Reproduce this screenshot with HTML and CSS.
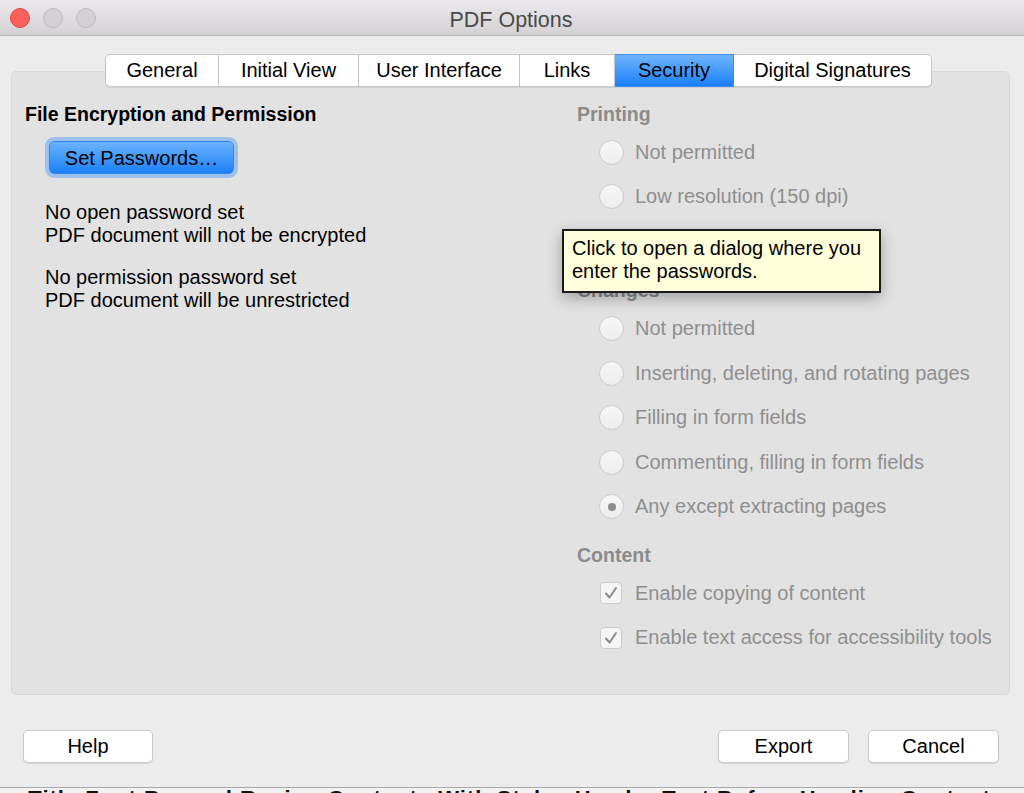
FILE: index.html
```html
<!DOCTYPE html>
<html lang="en">
<head>
    <meta charset="UTF-8">
    <title>PDF Options</title>
    <link rel="stylesheet" href="styles.css">
</head>
<body>
    <div class="window">
        <header class="titlebar">
            <div class="lights">
                <span class="light close"></span>
                <span class="light"></span>
                <span class="light"></span>
            </div>
            <div class="title">PDF Options</div>
            <div></div>
        </header>

        <main class="dialog">
            <nav class="tabs">
                <a class="tab" href="#">General</a>
                <a class="tab" href="#">Initial View</a>
                <a class="tab" href="#">User Interface</a>
                <a class="tab" href="#">Links</a>
                <a class="tab active" href="#">Security</a>
                <a class="tab" href="#">Digital Signatures</a>
            </nav>

            <section class="panel">
                <div class="col">
                    <h2 class="heading">File Encryption and Permission</h2>
                    <button class="btn-primary">Set Passwords…</button>
                    <p class="status">No open password set<br>PDF document will not be encrypted</p>
                    <p class="status second">No permission password set<br>PDF document will be unrestricted</p>
                </div>

                <div class="col">
                    <h2 class="heading muted">Printing</h2>
                    <div class="option"><span class="radio"></span>Not permitted</div>
                    <div class="option"><span class="radio"></span>Low resolution (150 dpi)</div>
                    <div class="option"><span class="radio"></span>High resolution</div>

                    <h2 class="heading muted changes">Changes</h2>
                    <div class="option"><span class="radio"></span>Not permitted</div>
                    <div class="option"><span class="radio"></span>Inserting, deleting, and rotating pages</div>
                    <div class="option"><span class="radio"></span>Filling in form fields</div>
                    <div class="option"><span class="radio"></span>Commenting, filling in form fields</div>
                    <div class="option"><span class="radio checked"></span>Any except extracting pages</div>

                    <h2 class="heading muted">Content</h2>
                    <div class="option">
                        <span class="check"><svg viewBox="0 0 22 22" width="22" height="22"><polyline points="6,11.5 9.5,15.5 16,6" /></svg></span>
                        Enable copying of content
                    </div>
                    <div class="option">
                        <span class="check"><svg viewBox="0 0 22 22" width="22" height="22"><polyline points="6,11.5 9.5,15.5 16,6" /></svg></span>
                        Enable text access for accessibility tools
                    </div>
                </div>
            </section>

            <footer class="buttons">
                <button class="btn">Help</button>
                <span class="spacer"></span>
                <button class="btn">Export</button>
                <button class="btn">Cancel</button>
            </footer>
        </main>

        <div class="tooltip">Click to open a dialog where you<br>enter the passwords.</div>
    </div>

    <div class="backdrop">
        <span>a Title Font Bar and Region Contents With Styles Header Text Before Heading Content</span>
    </div>
</body>
</html>
```

FILE: styles.css
```css
body {
    margin: 0;
    padding: 0;
    font-family: "Liberation Sans", Arial, sans-serif;
    background-color: #ffffff;
    overflow: hidden;
}
.window {
    position: relative;
    height: 788px;
    box-sizing: border-box;
    background-color: #ececec;
    border-bottom: 1px solid #a9a9a9;
}
.titlebar {
    display: grid;
    grid-template-columns: 1fr auto 1fr;
    align-items: center;
    height: 35px;
    background: linear-gradient(#ebe9eb, #d4d2d4);
    border-bottom: 1px solid #b4b4b4;
}
.lights {
    display: flex;
    gap: 13px;
    padding: 1px 0 0 10px;
}
.light {
    width: 20px;
    height: 20px;
    box-sizing: border-box;
    border-radius: 50%;
    background-color: #d3d1d3;
    border: 1px solid #bdbbbd;
}
.light.close {
    background-color: #fc605b;
    border-color: #de4842;
}
.title {
    font-size: 21.5px;
    color: #4a4a4a;
    margin: 5px 0 0 -2px;
}
.dialog {
    display: flex;
    flex-direction: column;
    padding: 0 14px 0 11px;
}
.tabs {
    display: flex;
    align-self: flex-start;
    margin: 18px 0 -16px 94px;
    position: relative;
    z-index: 1;
}
.tab {
    box-sizing: border-box;
    height: 33px;
    line-height: 31px;
    text-align: center;
    font-size: 20px;
    color: #000;
    text-decoration: none;
    background-color: #fff;
    border: 1px solid #c6c6c6;
    border-left: none;
    box-shadow: 0 1px 1px rgba(0, 0, 0, 0.08);
}
.tab:nth-child(1) { width: 114px; border-left: 1px solid #c6c6c6; border-radius: 5px 0 0 5px; }
.tab:nth-child(2) { width: 140px; }
.tab:nth-child(3) { width: 161px; }
.tab:nth-child(4) { width: 95px; }
.tab:nth-child(5) { width: 119px; }
.tab:nth-child(6) { width: 198px; border-radius: 0 5px 5px 0; }
.tab.active {
    background: linear-gradient(#6fb4fb, #1a80fa);
    border-color: #3a8ef0;
}
.panel {
    display: grid;
    grid-template-columns: 552px 1fr;
    height: 624px;
    box-sizing: border-box;
    padding: 29px 13px 0 13px;
    background-color: #e2e2e2;
    border: 1px solid #d8d8d8;
    border-radius: 5px;
}
.col {
    display: flex;
    flex-direction: column;
    align-items: flex-start;
}
.heading {
    margin: 0;
    font-size: 19.5px;
    line-height: 26px;
    font-weight: bold;
    color: #000;
}
.heading.muted {
    color: #8b8b8b;
    margin: 13px 0 3px;
}
.heading.muted:first-child {
    margin-top: 0;
}
.heading.changes {
    margin-bottom: 4px;
}
.btn-primary {
    width: 185px;
    height: 33px;
    margin: 14px 0 0 24px;
    padding-top: 2px;
    font-family: inherit;
    font-size: 20px;
    color: #000;
    background: linear-gradient(#6cb3fd, #1b80f9);
    border: 1px solid #2f86ee;
    border-radius: 5px;
    box-shadow: 0 0 0 4px rgba(112, 172, 243, 0.6);
}
.status {
    margin: 27px 0 0 20px;
    font-size: 20px;
    line-height: 23px;
    color: #000;
}
.status.second {
    margin-top: 19px;
}
.option {
    display: flex;
    align-items: center;
    height: 44.5px;
    padding-left: 22px;
    font-size: 20px;
    color: #8e8e8e;
    white-space: nowrap;
}
.radio {
    position: relative;
    width: 25px;
    height: 25px;
    box-sizing: border-box;
    margin-right: 11px;
    border-radius: 50%;
    border: 1px solid #cbcbcb;
    background: linear-gradient(#f6f6f6, #eeeeee);
}
.radio.checked::after {
    content: "";
    position: absolute;
    left: 7.5px;
    top: 7.5px;
    width: 8px;
    height: 8px;
    border-radius: 50%;
    background-color: #8c8c8c;
}
.check {
    display: flex;
    width: 22px;
    height: 22px;
    box-sizing: border-box;
    margin: 0 13px 0 1px;
    border: 1px solid #cbcbcb;
    border-radius: 4px;
    background-color: #f5f5f5;
}
.check svg {
    margin: -1px;
    fill: none;
    stroke: #8a8a8a;
    stroke-width: 2;
    stroke-linecap: round;
    stroke-linejoin: round;
}
.buttons {
    display: flex;
    gap: 19px;
    margin-top: 35px;
    padding: 0 11px 0 12px;
}
.spacer {
    flex: 1;
}
.btn {
    width: 131px;
    height: 33px;
    font-family: inherit;
    font-size: 20px;
    color: #000;
    background-color: #fff;
    border: 1px solid #c9c9c9;
    border-radius: 5px;
    box-shadow: 0 1px 1px rgba(0, 0, 0, 0.1);
}
.btn:first-child {
    width: 130px;
}
.tooltip {
    position: absolute;
    left: 562px;
    top: 229px;
    width: 319px;
    height: 64px;
    box-sizing: border-box;
    padding: 6px 8px 4px;
    font-size: 20px;
    line-height: 23px;
    color: #000;
    background-color: #ffffdb;
    border: 2px solid #1b1b1b;
    box-shadow: 0 5px 14px rgba(0, 0, 0, 0.3);
}
.backdrop {
    height: 5px;
    overflow: hidden;
    padding-left: 8px;
    background-color: #f2f2f2;
}
.backdrop span {
    display: block;
    margin-top: 0;
    font-size: 22px;
    line-height: 22px;
    font-weight: bold;
    color: #111;
    white-space: nowrap;
    letter-spacing: 1px;
}
```
